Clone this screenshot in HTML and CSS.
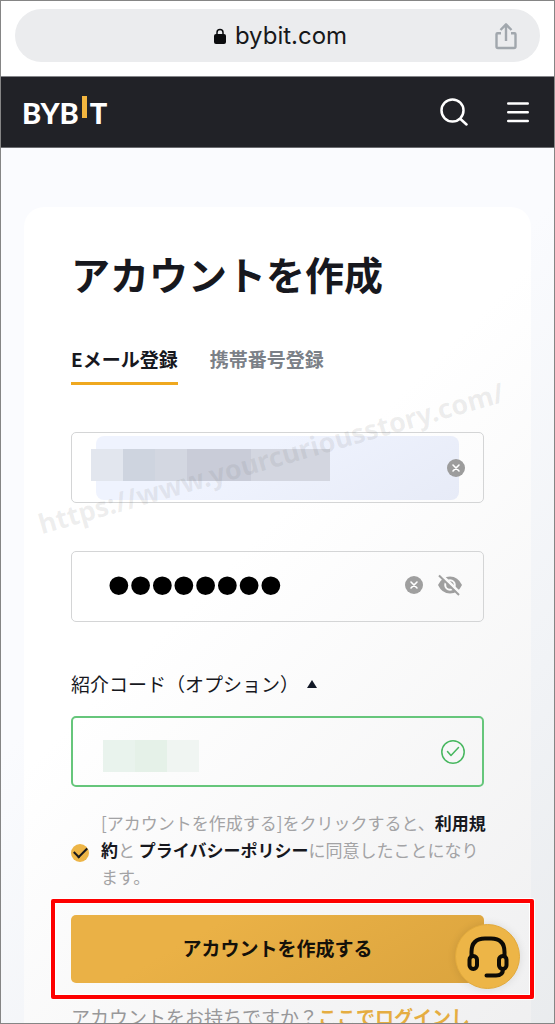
FILE: index.html
```html
<!DOCTYPE html>
<html lang="ja">
<head>
<meta charset="UTF-8">
<meta name="viewport" content="width=device-width, initial-scale=1.0">
<title>アカウントを作成 | Bybit</title>
<link rel="stylesheet" href="styles.css">
</head>
<body>
<div class="screen">

    <!-- Browser bar -->
    <div class="browser-bar">
        <div class="address">
            <svg class="lock" viewBox="0 0 12 16" width="12" height="16" aria-hidden="true">
                <path d="M3 8V4.5a3 3 0 0 1 6 0V8" fill="none" stroke="#0b0c0e" stroke-width="1.5"/>
                <rect x="0" y="6" width="12" height="10" rx="2" fill="#0b0c0e"/>
            </svg>
            <span>bybit.com</span>
            <button class="icon-btn share" type="button" aria-label="共有">
                <svg viewBox="0 0 22 28" width="22" height="28" fill="none" stroke="#a1a7ad" stroke-width="2.4" stroke-linejoin="round">
                    <path d="M6 11.200H2.500Q1.500 11.200 1.500 12.200V24.500Q1.500 26 3 26H19Q20.500 26 20.500 24.500V12.200Q20.500 11.200 19.500 11.200H16M11 19V2.500M5.500 8L11 2.300L16.500 8"/>
                </svg>
            </button>
        </div>
    </div>

    <header class="header">
        <a class="logo" href="#" aria-label="BYBIT">BYB<i class="logo-bar"></i>T</a>
        <div class="header-actions">
            <button class="icon-btn" type="button" aria-label="検索">
                <svg viewBox="0 0 28 28" width="28" height="28" fill="none" stroke="#fff" stroke-width="2.500" stroke-linecap="round">
                    <circle cx="12.500" cy="12.500" r="11"/>
                    <path d="M20.500 21L26.500 26.500"/>
                </svg>
            </button>
            <button class="icon-btn" type="button" aria-label="メニュー">
                <svg viewBox="0 0 22 22" width="22" height="22" stroke="#fff" stroke-width="2.400" stroke-linecap="round">
                    <path d="M1.200 2.500H20.800M1.200 11.200H20.800M1.200 20H20.800"/>
                </svg>
            </button>
        </div>
    </header>

    <main class="main">
        <form class="card">
            <h1>アカウントを作成</h1>

            <nav class="tabs">
                <a class="tab active" href="#">Eメール登録</a>
                <a class="tab" href="#">携帯番号登録</a>
            </nav>

            <!-- Email -->
            <div class="field email">
                <input type="email" aria-label="Eメール">
                <div class="mask mask-email"><i></i><i></i><i></i><i></i><i></i></div>
                <button class="icon-btn clear" type="button" aria-label="クリア">
                    <svg viewBox="0 0 18 18" width="18" height="18">
                        <circle cx="9" cy="9" r="9" fill="#9c9c9c"/>
                        <path d="M6 6l6 6M12 6l-6 6" stroke="#fff" stroke-width="1.600" stroke-linecap="round"/>
                    </svg>
                </button>
            </div>

            <!-- Password -->
            <div class="field password">
                <input type="password" value="password" aria-label="パスワード">
                <button class="icon-btn" type="button" aria-label="クリア">
                    <svg viewBox="0 0 18 18" width="18" height="18">
                        <circle cx="9" cy="9" r="9" fill="#9f9f9f"/>
                        <path d="M6 6l6 6M12 6l-6 6" stroke="#fff" stroke-width="1.600" stroke-linecap="round"/>
                    </svg>
                </button>
                <button class="icon-btn" type="button" aria-label="パスワードを表示">
                    <svg viewBox="0 0 26 22" width="26" height="22">
                        <path d="M1 11Q5 2.500 13 2.500T25 11Q21 19.500 13 19.500T1 11Z" fill="#9f9f9f"/>
                        <circle cx="13" cy="11" r="4.800" fill="#9f9f9f" stroke="#fafafa" stroke-width="2"/>
                        <path d="M4 .5L24 20" stroke="#fafafa" stroke-width="3"/>
                        <path d="M2 1.500L22 21" stroke="#9f9f9f" stroke-width="2"/>
                    </svg>
                </button>
            </div>

            <!-- Referral code -->
            <label class="ref-label" for="ref">紹介コード（オプション）
                <svg viewBox="0 0 10 8" width="10" height="8"><path d="M5 0l5 8H0z" fill="#121826"/></svg>
            </label>
            <div class="field ref">
                <input type="text" id="ref">
                <div class="mask mask-ref"><i></i><i></i><i></i></div>
                <svg viewBox="0 0 24 24" width="24" height="24" fill="none" stroke="#47b75f" stroke-width="1.500" stroke-linecap="round" stroke-linejoin="round">
                    <circle cx="12" cy="12" r="11.200"/>
                    <path d="M6.500 11.500L10 15.500L17.500 7.500"/>
                </svg>
            </div>

            <div class="terms">
                <input type="checkbox" id="agree" checked>
                <label for="agree">[アカウントを作成する]をクリックすると、<a href="#">利用規<br>約</a>と <a href="#">プライバシーポリシー</a>に同意したことになり<br>ます。</label>
            </div>

            <div class="submit-area">
                <button class="submit" type="submit">アカウントを作成する</button>
                <button class="support" type="button" aria-label="サポート">
                    <svg viewBox="0 0 42 42" width="42" height="42" fill="none" stroke="#0d0b06" stroke-width="4" stroke-linecap="round">
                        <path d="M4.500 20V16Q4.500 2.500 18 2.500H24Q37.500 2.500 37.500 16V20"/>
                        <rect x="2.500" y="20" width="7.500" height="13" rx="3.700"/>
                        <rect x="32" y="20" width="7.500" height="13" rx="3.700"/>
                        <path d="M36 33Q36 39.500 29 39.500H19.500"/>
                    </svg>
                </button>
            </div>

            <p class="login">アカウントをお持ちですか？<a href="#">ここでログインし</a></p>

            <div class="watermark">https://www.yourcuriousstory.com/</div>
        </form>
    </main>

</div>
</body>
</html>
```

FILE: styles.css
```css
* {
    box-sizing: border-box;
}
body {
    margin: 0;
    font-family: "Noto Sans CJK JP", sans-serif;
    color: #17181e;
    background: #fff;
}
a {
    color: inherit;
    text-decoration: none;
}
.screen {
    display: flex;
    flex-direction: column;
    height: 100vh;
    border: 1px solid #858585;
    overflow: hidden;
}
.icon-btn {
    display: flex;
    padding: 0;
    border: 0;
    background: none;
    cursor: pointer;
}

/* Browser bar */
.browser-bar {
    flex: none;
    padding: 8px 14px 14px;
}
.address {
    position: relative;
    display: flex;
    align-items: center;
    justify-content: center;
    gap: 9px;
    height: 53px;
    padding-left: 6px;
    border-radius: 27px;
    background: #ebecee;
    font-family: Inter, sans-serif;
    font-size: 24px;
    color: #17181a;
}
.share {
    position: absolute;
    right: 23px;
}

/* Header */
.header {
    flex: none;
    display: flex;
    align-items: center;
    justify-content: space-between;
    height: 72px;
    padding: 0 25px 0 21px;
    border-top: 1px solid #85868a;
    border-bottom: 1px solid #6b6c70;
    background: #212227;
}
.logo {
    display: flex;
    align-items: center;
    padding-top: 2px;
    font-family: Lato, sans-serif;
    font-size: 29px;
    font-weight: 900;
    line-height: 36px;
    color: #fff;
}
.logo-bar {
    width: 5px;
    height: 22px;
    margin: 0 3px 12px;
    background: #f3b63f;
}
.header-actions {
    display: flex;
    align-items: center;
    gap: 39px;
}

/* Card */
.main {
    flex: 1;
    padding: 59px 23px 0;
    background: linear-gradient(135deg, #fafbfe 40%, #f1f3f6 70%, #e8eaec);
}
.card {
    position: relative;
    height: 100%;
    min-height: 900px;
    padding: 33px 47px;
    border-radius: 20px 20px 0 0;
    background: linear-gradient(135deg, #fff 40%, #eeeeef);
}
h1 {
    margin: 0;
    font-size: 39px;
    font-weight: 700;
    line-height: 66px;
}
.tabs {
    display: flex;
    gap: 32px;
    margin-top: 38px;
}
.tab {
    padding-bottom: 8px;
    font-size: 19px;
    font-weight: 700;
    line-height: 30px;
    color: #7b8087;
    border-bottom: 3px solid transparent;
}
.tab.active {
    color: #17181e;
    border-color: #efa81f;
}

/* Fields */
.field {
    position: relative;
    display: flex;
    align-items: center;
    height: 71px;
    border: 1px solid #d4d5d6;
    border-radius: 5px;
}
.field input {
    flex: 1;
    min-width: 0;
    height: 64px;
    padding: 0;
    border: 0;
    outline: 0;
    background: none;
    font-size: 19px;
}
.mask {
    position: absolute;
    display: flex;
    height: 32px;
}
.mask i {
    width: 32px;
}
.email {
    margin-top: 47px;
    padding: 0 24px;
}
.email input {
    border-radius: 8px;
    background: linear-gradient(150deg, #eff3fe 40%, #e7ebf7);
}
.mask-email {
    left: 19px;
    top: 16px;
}
.mask-email i:nth-child(1) { background: #e2e6ee; }
.mask-email i:nth-child(2) { background: #ced4df; }
.mask-email i:nth-child(3) { background: #d3d7e1; }
.mask-email i:nth-child(4) { width: 64px; background: #c9ccd8; }
.mask-email i:nth-child(5) { width: 79px; background: #d3d6e0; }
.clear {
    position: absolute;
    right: 18px;
}
.password {
    gap: 14px;
    margin-top: 48px;
    padding: 0 20px 4px 36px;
}
.password input {
    font-family: "Liberation Sans", sans-serif;
    font-size: 62px;
    color: #000;
    -webkit-text-stroke: 2px #000;
}
.ref-label {
    display: flex;
    align-items: center;
    gap: 8px;
    margin-top: 46px;
    font-size: 19px;
    line-height: 32px;
}
.ref {
    margin-top: 16px;
    padding: 0 17px;
    border: 2px solid #66c67b;
}
.mask-ref {
    left: 30px;
    top: 22px;
}
.mask-ref i:nth-child(1) { background: #e9f3ed; }
.mask-ref i:nth-child(2) { background: #e5f1e8; }
.mask-ref i:nth-child(3) { background: #f0f5f2; }

/* Terms */
.terms {
    display: flex;
    align-items: center;
    gap: 12px;
    margin-top: 22px;
    font-size: 17px;
    line-height: 27px;
    color: #a3a3a5;
    white-space: nowrap;
}
.terms a {
    font-weight: 700;
    color: #17181e;
}
.terms input {
    flex: none;
    appearance: none;
    display: grid;
    place-items: center;
    width: 18px;
    height: 18px;
    margin: 6px 0 0;
    border-radius: 50%;
    background: #edb547;
}
.terms input:checked::after {
    content: "";
    width: 11px;
    height: 6px;
    margin-bottom: 4px;
    border: solid #17181e;
    border-width: 0 0 2px 2px;
    transform: rotate(-45deg);
}

/* Submit */
.submit-area {
    position: relative;
    margin-top: 25px;
}
.submit-area::after {
    content: "";
    position: absolute;
    inset: -16px -50px -16px -20px;
    border: 4px solid #fe0000;
    border-radius: 2px;
    box-shadow: 0 0 0 1px #fff, inset 0 0 0 1px #fff;
    pointer-events: none;
}
.submit {
    display: block;
    width: 100%;
    height: 68px;
    padding: 0 0 4px;
    border: 0;
    border-radius: 5px;
    background: linear-gradient(150deg, #eab146 30%, #dba43e);
    font-family: inherit;
    font-size: 19px;
    font-weight: 700;
    color: #14110a;
    cursor: pointer;
}
.support {
    position: absolute;
    top: 9px;
    right: -36px;
    display: grid;
    place-items: center;
    width: 65px;
    height: 65px;
    padding: 0;
    border: 1px solid #e2aa3c;
    border-radius: 50%;
    background: #edb547;
    box-shadow: 0 0 8px rgba(0,0,0,0.1);
    cursor: pointer;
}
.login {
    margin: 20px 0 0;
    font-size: 19px;
    line-height: 28px;
    color: #98989a;
    white-space: nowrap;
}
.login a {
    font-weight: 700;
    color: #e5ad41;
}

/* Watermark */
.watermark {
    position: absolute;
    left: 20px;
    top: 299px;
    font-family: "Noto Sans", sans-serif;
    font-size: 27px;
    font-weight: 700;
    line-height: 36px;
    white-space: nowrap;
    color: rgba(120,120,120,0.13);
    transform: rotate(-16deg);
    transform-origin: 0 100%;
    pointer-events: none;
}
```
